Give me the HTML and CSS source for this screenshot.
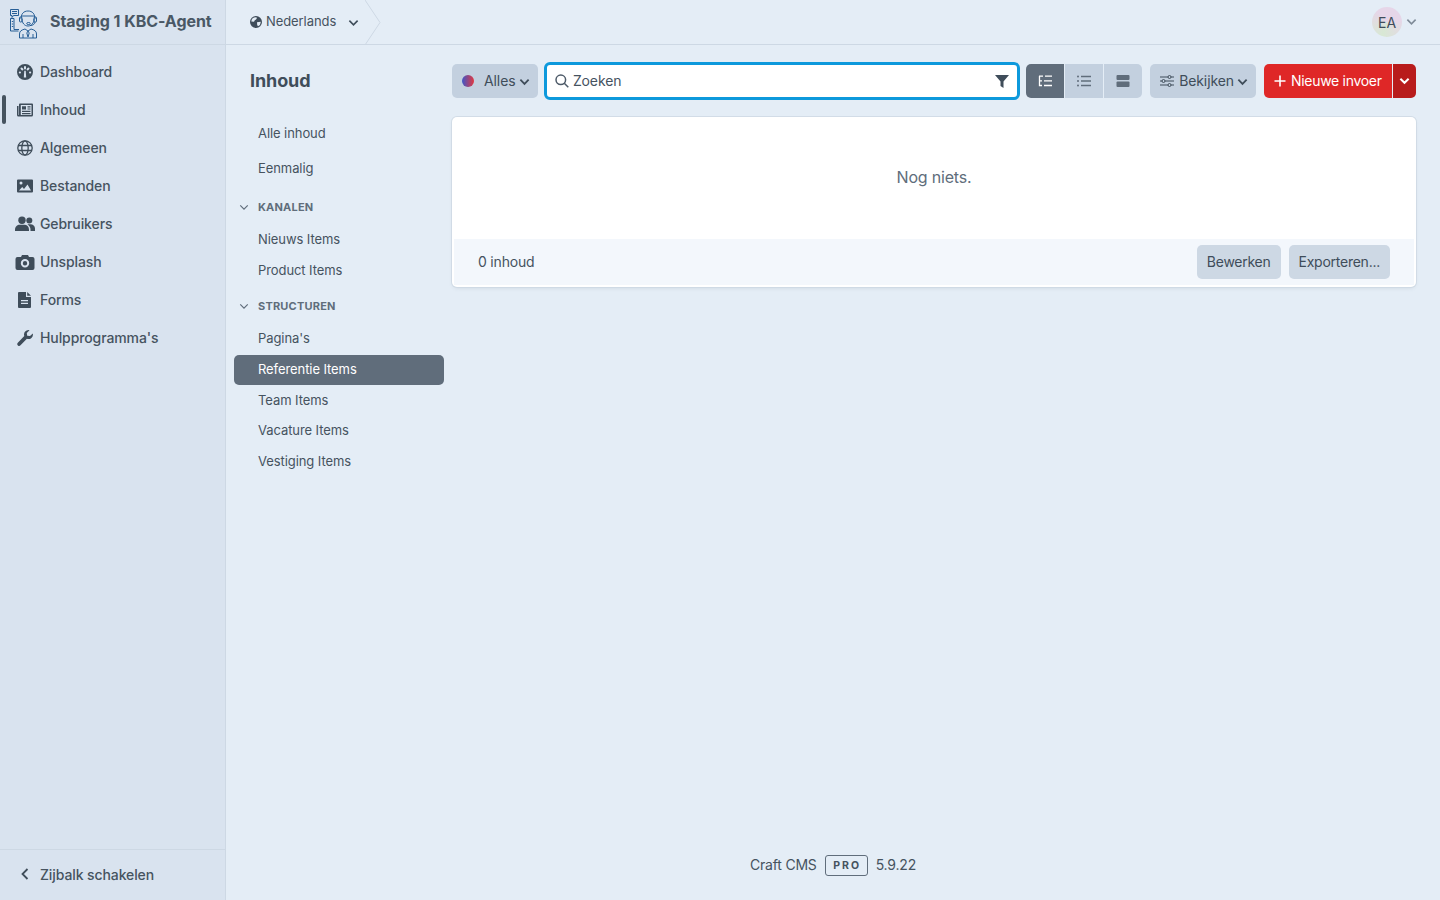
FILE: index.html
```html
<!DOCTYPE html>
<html lang="nl">
<head>
<meta charset="utf-8">
<title>Inhoud - Staging 1 KBC-Agent</title>
<link rel="stylesheet" href="styles.css">
</head>
<body>
<div class="app">
  <aside class="sidebar">
    <div class="brand">
      <svg class="logo" viewBox="0 0 32 32" fill="none" stroke="#14508c" stroke-width="0.900">
        <path d="M1.500 2.500h8v6h-5l-1.500 2v-2h-1.500z"/><path d="M3 4.500h5M3 6.500h5"/>
        <path d="M1.500 11.500h3.500v11h5M1.500 11.500v12.500h8"/><path d="M2.800 14.500h1.400M2.800 17h1.400M2.800 19.500h1.400"/>
        <path d="M12 12c0-5 2.500-8 7-8s7 3 7 8"/><path d="M12 9h14"/>
        <path d="M13 12c0 4 2.500 7 6 7s6-3 6-7"/>
        <rect x="10.500" y="10" width="2.500" height="5" rx="1"/><rect x="25" y="10" width="2.500" height="5" rx="1"/>
        <path d="M26 15c0 2-2 3.500-5 3.500"/><ellipse cx="19.500" cy="16.500" rx="1.800" ry="1"/>
        <path d="M10.500 31v-4c0-3 2-4 5.500-5l3 2 3-2c3.500 1 5.500 2 5.500 5v4zM19 24l-1.200 2 1.200 4 1.200-4zM14 31v-4M24 31v-4"/>
      </svg>
      <span class="site-name">Staging 1 KBC-Agent</span>
    </div>
    <nav class="nav">
      <a class="nav-item"><svg class="nav-icon" viewBox="0 0 16 16"><path fill-rule="evenodd" d="M8 0a8 8 0 1 0 0 16A8 8 0 0 0 8 0zM8 2a1 1 0 0 1 1 1v1.500a1 1 0 0 1-2 0V3a1 1 0 0 1 1-1zM3.800 3.800a1 1 0 0 1 1.400 0l1 1a1 1 0 0 1-1.400 1.400l-1-1a1 1 0 0 1 0-1.400zm8.400 0a1 1 0 0 1 0 1.400l-1 1a1 1 0 0 1-1.400-1.400l1-1a1 1 0 0 1 1.400 0zM3 7.500a1 1 0 0 1 0 2H2.800a1 1 0 0 1 0-2zm10.200 0a1 1 0 0 1 0 2H13a1 1 0 0 1 0-2zM7.300 6.800h1.400l.5 6.700H6.800z"/></svg><span>Dashboard</span></a>
      <a class="nav-item current"><span class="marker"></span><svg class="nav-icon" viewBox="0 0 16 16"><path fill-rule="evenodd" d="M3 1.500h12a1 1 0 0 1 1 1V13a1.500 1.500 0 0 1-1.500 1.500H1.500A1.500 1.500 0 0 1 0 13V4h1.500v9H2V2.500a1 1 0 0 1 1-1zM3.800 3v10h10.700V3zM5 4.200h4v3.300H5zm5.500 0h3v1.200h-3zm0 2.200h3v1.100h-3zM5 8.800h8.500v1.200H5zm0 2.200h8.500v1.200H5z"/></svg><span>Inhoud</span></a>
      <a class="nav-item"><svg class="nav-icon line" viewBox="0 0 16 16"><circle cx="8" cy="8" r="7.200"/><ellipse cx="8" cy="8" rx="3.200" ry="7.200"/><path d="M1 5.500h14M1 10.500h14"/></svg><span>Algemeen</span></a>
      <a class="nav-item"><svg class="nav-icon" viewBox="0 0 16 16"><path fill-rule="evenodd" d="M1 1.500h14a1 1 0 0 1 1 1v11a1 1 0 0 1-1 1H1a1 1 0 0 1-1-1v-11a1 1 0 0 1 1-1zM4 3.500a1.500 1.500 0 1 0 0 3 1.500 1.500 0 0 0 0-3zM2 12.500h12L10.500 6.500 7 11 5.200 9z"/></svg><span>Bestanden</span></a>
      <a class="nav-item"><svg class="nav-icon wide" viewBox="0 0 20 16"><circle cx="7" cy="4.200" r="3.700"/><path d="M0 15v-1.500C0 10.500 2.500 8.800 4.500 8.800h5c2.300 0 4.500 1.700 4.500 4.700V15z"/><circle cx="14.300" cy="4.500" r="3"/><path d="M12.500 8.500c.5-.2 1-.2 1.500-.2h1.500c2.500 0 4.500 1.800 4.500 4.200V15h-4.500v-1.500c0-2-1-3.700-3-5z"/></svg><span>Gebruikers</span></a>
      <a class="nav-item"><svg class="nav-icon wide" viewBox="0 0 20 16"><path fill-rule="evenodd" d="M7 1h6l1 2h3.500a2 2 0 0 1 2 2v9a2 2 0 0 1-2 2h-15a2 2 0 0 1-2-2V5a2 2 0 0 1 2-2H6zM10 5a4.200 4.200 0 1 0 0 8.400A4.200 4.200 0 0 0 10 5zm0 2a2.200 2.200 0 1 1 0 4.400A2.200 2.200 0 0 1 10 7z"/></svg><span>Unsplash</span></a>
      <a class="nav-item"><svg class="nav-icon" viewBox="0 0 16 16"><path fill-rule="evenodd" d="M2 0h7v5h5v10a1 1 0 0 1-1 1H2a1 1 0 0 1-1-1V1a1 1 0 0 1 1-1zm8.200 0L14 3.800H10.200zM4 8v1.300h7V8zm0 2.800v1.300h7v-1.300z"/></svg><span>Forms</span></a>
      <a class="nav-item"><svg class="nav-icon" viewBox="0 0 16 16"><path d="M15.800 3.500a4.500 4.500 0 0 1-5.900 5.300L3.500 15.300a1.800 1.800 0 0 1-2.700-2.500l6.500-6.700A4.500 4.500 0 0 1 12.500.2L9.800 3l.4 2.700 2.800.4z"/></svg><span>Hulpprogramma's</span></a>
    </nav>
    <a class="collapse">
      <svg class="collapse-icon" viewBox="0 0 10 14" fill="none" stroke="#3f4d5a" stroke-width="1.800"><path d="M7.500 2L2.500 7l5 5"/></svg>
      <span>Zijbalk schakelen</span>
    </a>
  </aside>

  <div class="page">
    <header class="topbar">
      <div class="crumb">
        <svg class="crumb-globe" viewBox="0 0 12 12"><path fill-rule="evenodd" d="M6 0a6 6 0 1 0 0 12A6 6 0 0 0 6 0zM1.300 5.500A4.700 4.700 0 0 1 6 1.300c.8 0 1 .5.700 1.200L6 3.500 4.800 4.200 4 5.800zM7 6.200l3.700-.5A4.700 4.700 0 0 1 8 10.300L7.200 9z"/></svg>
        <span class="crumb-label">Nederlands</span>
        <svg class="crumb-chev" viewBox="0 0 12 8" fill="none" stroke="#3f4d5a" stroke-width="1.800"><path d="M1.500 1.500L6 6l4.500-4.500"/></svg>
        <svg class="crumb-arrow" viewBox="0 0 16 45" fill="none" stroke="#cdd8e4"><path d="M0 0l15 22.500L0 45"/></svg>
      </div>
      <div class="account">
        <span class="avatar">EA</span>
        <svg class="account-chev" viewBox="0 0 12 8" fill="none" stroke="#7f8b98" stroke-width="1.800"><path d="M1.500 1.500L6 6l4.500-4.500"/></svg>
      </div>
    </header>

    <div class="content">
      <aside class="sources">
        <h1 class="title">Inhoud</h1>
        <ul class="source-list">
          <li class="source s-first">Alle inhoud</li>
          <li class="source s-single">Eenmalig</li>
        </ul>
        <div class="heading h-channels"><svg viewBox="0 0 12 8" fill="none" stroke="#606d7b" stroke-width="1.400"><path d="M1.500 1.500L6 6l4.500-4.500"/></svg><span>KANALEN</span></div>
        <ul class="source-list">
          <li class="source">Nieuws Items</li>
          <li class="source">Product Items</li>
        </ul>
        <div class="heading h-structures"><svg viewBox="0 0 12 8" fill="none" stroke="#606d7b" stroke-width="1.400"><path d="M1.500 1.500L6 6l4.500-4.500"/></svg><span>STRUCTUREN</span></div>
        <ul class="source-list tight">
          <li class="source">Pagina's</li>
          <li class="source selected">Referentie Items</li>
          <li class="source">Team Items</li>
          <li class="source">Vacature Items</li>
          <li class="source">Vestiging Items</li>
        </ul>
      </aside>

      <main class="main">
        <div class="toolbar">
          <button class="btn site-btn"><span class="dot"></span><span>Alles</span><svg class="chev" viewBox="0 0 12 8" fill="none" stroke="#3f4d5a" stroke-width="2"><path d="M1.500 1.500L6 6l4.500-4.500"/></svg></button>
          <div class="search">
            <svg class="search-icon" viewBox="0 0 14 14" fill="none" stroke="#4d5a68" stroke-width="1.500"><circle cx="5.800" cy="5.800" r="4.800"/><path d="M9.300 9.300l4 4"/></svg>
            <span class="search-text">Zoeken</span>
            <svg class="filter-icon" viewBox="0 0 14 13"><path d="M0 0h14L8.500 6.500V13l-3-2V6.500z" fill="#3f4d5a"/></svg>
          </div>
          <div class="view-group">
            <button class="view active"><svg viewBox="0 0 14 12" fill="none" stroke="#fff" stroke-width="1.300" class="view-icon"><path d="M1.500 1v9.500h2.500M1.500 5.800h2.500M1 1.200h4M7 1.200h7M6 5.800h8M6 10.500h8"/></svg></button>
            <button class="view"><svg viewBox="0 0 14 12" class="view-icon" fill="#606d7b"><circle cx="1" cy="1.500" r="1"/><circle cx="1" cy="6" r="1"/><circle cx="1" cy="10.500" r="1"/><path d="M4 .8h10v1.400H4zM4 5.300h10v1.400H4zM4 9.800h10v1.400H4z"/></svg></button>
            <button class="view"><svg viewBox="0 0 13 12" class="view-icon" fill="#606d7b"><rect width="13" height="5" rx="1"/><rect y="6.500" width="13" height="5.500" rx="1"/></svg></button>
          </div>
          <button class="btn view-btn"><svg class="sliders" viewBox="0 0 14 12" fill="none" stroke="#3f4d5a" stroke-width="1"><path d="M0 2h8M11 2h3M0 6h2M5 6h9M0 10h8M11 10h3"/><circle cx="9.500" cy="2" r="1.500"/><circle cx="3.500" cy="6" r="1.500"/><circle cx="9.500" cy="10" r="1.500"/></svg><span>Bekijken</span><svg class="chev" viewBox="0 0 12 8" fill="none" stroke="#3f4d5a" stroke-width="2"><path d="M1.500 1.500L6 6l4.500-4.500"/></svg></button>
          <div class="new-group">
            <button class="new-main"><svg class="plus" viewBox="0 0 12 12" fill="none" stroke="#fff" stroke-width="1.600"><path d="M6 .5v11M.5 6h11"/></svg><span>Nieuwe invoer</span></button>
            <button class="new-menu"><svg viewBox="0 0 12 8" fill="none" stroke="#fff" stroke-width="2.200"><path d="M1.500 1.500L6 6l4.500-4.500"/></svg></button>
          </div>
        </div>
        <section class="card">
          <div class="empty">Nog niets.</div>
          <div class="card-footer">
            <span class="count">0 inhoud</span>
            <div class="footer-actions">
              <button class="btn small">Bewerken</button>
              <button class="btn small">Exporteren...</button>
            </div>
          </div>
        </section>
      </main>
    </div>

    <footer class="footer">
      <span>Craft CMS</span>
      <span class="edition">PRO</span>
      <span>5.9.22</span>
    </footer>
  </div>
</div>
</body>
</html>
```

FILE: styles.css
```css
* { box-sizing: border-box; }
html, body { margin: 0; height: 100%; }
body {
  font-family: Inter, "Noto Sans", sans-serif;
  font-size: 14px;
  color: #3f4d5a;
  background: #e4edf6;
  overflow: hidden;
  letter-spacing: -0.1px;
}
ul { list-style: none; margin: 0; padding: 0; }
button { font: inherit; letter-spacing: inherit; border: 0; cursor: pointer; }
.app { display: flex; height: 900px; }

.sidebar {
  width: 226px;
  flex: none;
  background: #d9e3ef;
  border-right: 1px solid #cdd8e4;
  display: flex;
  flex-direction: column;
}
.brand {
  height: 45px;
  flex: none;
  display: flex;
  align-items: center;
  padding-left: 9px;
  border-bottom: 1px solid #cdd8e4;
}
.logo { width: 32px; height: 32px; flex: none; margin-top: 2px; }
.site-name { margin-left: 9px; padding-bottom: 2px; font-size: 16px; font-weight: 700; color: #4a5865; white-space: nowrap; letter-spacing: -0.05px; }
.nav { flex: 1; padding-top: 8px; }
.nav-item {
  position: relative;
  height: 38px;
  display: flex;
  align-items: center;
  padding-left: 40px;
  padding-bottom: 2px;
  font-weight: 500;
  color: #46535f;
}
.nav-icon {
  position: absolute;
  left: 17px;
  top: 11px;
  width: 16px;
  height: 16px;
  fill: #3f4d5a;
}
.nav-icon.line { fill: none; stroke: #3f4d5a; stroke-width: 1.300; }
.nav-icon.wide { left: 15px; width: 20px; }
.marker {
  position: absolute;
  left: 2px;
  top: 4px;
  width: 4px;
  height: 29px;
  border-radius: 2px;
  background: #46535f;
}
.collapse {
  height: 51px;
  flex: none;
  display: flex;
  align-items: center;
  padding-left: 20px;
  padding-bottom: 2px;
  border-top: 1px solid #cdd8e4;
  font-weight: 500;
  color: #46535f;
}
.collapse-icon { width: 10px; height: 14px; margin-right: 10px; }

.page { flex: 1; min-width: 0; display: flex; flex-direction: column; }
.topbar {
  height: 45px;
  flex: none;
  display: flex;
  justify-content: space-between;
  align-items: center;
  border-bottom: 1px solid #cdd8e4;
  padding-left: 24px;
  padding-right: 23px;
}
.crumb { position: relative; display: flex; align-items: center; height: 44px; font-size: 13px; }
.crumb-globe { width: 12px; height: 12px; fill: #3f4d5a; }
.crumb-label { margin-left: 4px; padding-bottom: 2px; color: #46535f; letter-spacing: -0.08px; }
.crumb-chev { width: 11px; height: 8px; margin-left: 12px; margin-top: 2px; }
.crumb-arrow { position: absolute; left: 115px; top: 0; width: 16px; height: 45px; }
.account { display: flex; align-items: center; gap: 4px; }
.avatar {
  width: 30px;
  height: 30px;
  border-radius: 50%;
  background: conic-gradient(from 200deg, #d8e8d4, #e6d6e8, #e6d6e8, #d8e8d4);
  display: flex;
  align-items: center;
  justify-content: center;
  color: #3f4d5a;
}
.account-chev { width: 11px; height: 8px; }

.content { flex: 1; display: flex; min-height: 0; }
.sources { width: 226px; flex: none; padding: 0 0 0 8px; }
.title { margin: 0; padding: 24px 0 0 16px; font-size: 18px; line-height: 24px; font-weight: 700; color: #3f4d5a; letter-spacing: -0.1px; }
.source {
  height: 30px;
  margin-top: 1px;
  padding-left: 24px;
  padding-bottom: 2px;
  display: flex;
  align-items: center;
  font-size: 13px;
  color: #46535f;
  border-radius: 5px;
  letter-spacing: -0.08px;
  width: 210px;
}
.tight .source { margin-top: 0.75px; }
.s-first { margin-top: 26px; }
.s-single { margin-top: 5px; }
.source.selected { background: #606d7b; color: #fff; }
.heading {
  display: flex;
  align-items: center;
  height: 16px;
  font-size: 11px;
  font-weight: 700;
  letter-spacing: 0.2px;
  color: #606d7b;
  padding-left: 5px;
}
.heading svg { width: 10px; height: 7px; margin-right: 9px; }
.h-channels { margin-top: 15px; margin-bottom: 10px; }
.h-structures { margin-top: 12px; margin-bottom: 10px; }

.main { flex: 1; min-width: 0; padding: 19px 24px 0 0; }
.toolbar { display: flex; align-items: center; height: 34px; }
.btn {
  height: 34px;
  display: flex;
  align-items: center;
  border-radius: 5px;
  background: #c3d0df;
  color: #3f4d5a;
  padding: 0 0 2px;
}
.site-btn { width: 86px; padding-left: 10px; }
.dot {
  width: 12px;
  height: 12px;
  border-radius: 50%;
  background: linear-gradient(90deg, #3f56c8, #e2383f);
  margin-top: 2px;
  margin-right: 10px;
}
.chev { width: 11px; height: 8px; margin-left: 3px; margin-top: 4px; }
.search {
  width: 477px;
  height: 38px;
  margin-left: 6px;
  border: 3px solid #0d99dc;
  border-radius: 6px;
  background: #fff;
  display: flex;
  align-items: center;
  padding: 0 8px;
}
.search-icon { width: 14px; height: 14px; flex: none; }
.search-text { margin-left: 4px; padding-bottom: 2px; flex: 1; color: #46535f; }
.filter-icon { width: 14px; height: 13px; }
.view-group { display: flex; margin-left: 6px; height: 34px; gap: 1px; }
.view {
  width: 38px;
  height: 34px;
  background: #c3d0df;
  display: flex;
  align-items: center;
  justify-content: center;
  padding: 0;
}
.view:first-child { border-radius: 5px 0 0 5px; }
.view:last-child { border-radius: 0 5px 5px 0; }
.view.active { background: #606d7b; }
.view-icon { width: 14px; height: 12px; }
.view-btn { width: 106px; margin-left: 8px; padding-left: 10px; }
.sliders { width: 14px; height: 12px; margin-top: 2px; margin-right: 5px; }
.new-group { display: flex; margin-left: 8px; height: 34px; }
.new-main {
  width: 128px;
  height: 34px;
  background: #df2727;
  color: #fff;
  border-radius: 5px 0 0 5px;
  display: flex;
  align-items: center;
  padding: 0 0 0 10px;
  letter-spacing: -0.3px;
}
.new-main span { padding-bottom: 2px; }
.plus { width: 12px; height: 12px; margin-right: 5px; }
.new-menu {
  width: 23px;
  height: 34px;
  margin-left: 1px;
  background: #b81c1c;
  border-radius: 0 5px 5px 0;
  display: flex;
  align-items: center;
  justify-content: center;
  padding: 0;
}
.new-menu svg { width: 11px; height: 8px; }

.card {
  margin-top: 19px;
  height: 170px;
  background: #fff;
  border-radius: 5px;
  box-shadow: 0 0 0 1px rgba(205, 216, 228, 0.8), 0 2px 5px -2px rgba(63, 77, 90, 0.2);
  display: flex;
  flex-direction: column;
  overflow: hidden;
}
.empty {
  height: 122px;
  flex: none;
  display: flex;
  align-items: center;
  justify-content: center;
  padding-bottom: 2px;
  font-size: 16px;
  letter-spacing: -0.2px;
  color: #606d7b;
}
.card-footer {
  flex: 1;
  margin: 0 2px 2px;
  background: #f3f7fc;
  display: flex;
  align-items: center;
  justify-content: space-between;
  padding: 0 24px;
  color: #46535f;
  letter-spacing: -0.2px;
}
.count { padding-bottom: 1px; }
.footer-actions { display: flex; gap: 8px; }
.btn.small { height: 34px; background: #cdd8e4; padding: 0 10px 1px; letter-spacing: -0.25px; }

.footer {
  height: 70px;
  flex: none;
  display: flex;
  justify-content: center;
  align-items: flex-start;
  gap: 8px;
  padding-top: 25px;
  color: #46535f;
  line-height: 20px;
  letter-spacing: -0.2px;
}
.edition {
  border: 1px solid #606d7b;
  border-radius: 3px;
  height: 21px;
  width: 43px;
  padding-left: 2px;
  display: flex;
  align-items: center;
  justify-content: center;
  font-size: 10.500px;
  font-weight: 700;
  letter-spacing: 2px;
  color: #46535f;
}
```
